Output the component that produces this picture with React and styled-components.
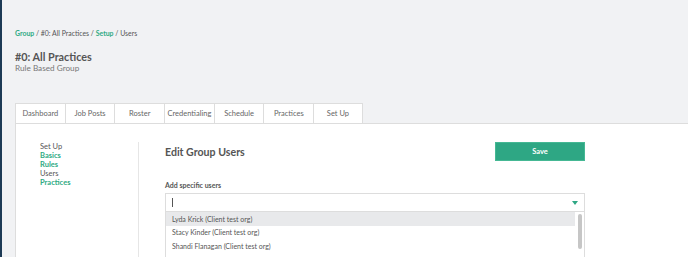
import React from "react";
import styled, { createGlobalStyle } from "styled-components";

const Global = createGlobalStyle`
  html, body { margin: 0; padding: 0; }
  body {
    background: #f1f2f4;
    font-family: "Lato", "Open Sans", sans-serif;
    color: #555;
    overflow: hidden;
  }
`;

const Page = styled.div`
  height: 257px;
  overflow: hidden;
  border-left: 2px solid #1d3a55;
  padding: 28px 0 0 13px;
  box-sizing: border-box;
`;

const Crumbs = styled.div`
  font-size: 6.9px;
  color: #555;
  line-height: 10px;
`;

const CrumbLink = styled.span`
  color: #2eaa83;
  font-weight: 700;
`;

const Title = styled.h1`
  margin: 12px 0 0;
  font-size: 10.8px;
  line-height: 13px;
  font-weight: 700;
  color: #555;
`;

const Subtitle = styled.div`
  font-size: 8.2px;
  line-height: 10px;
  color: #777;
`;

const Tabs = styled.div`
  display: flex;
  margin-top: 30px;
`;

const Tab = styled.div`
  width: 49.7px;
  height: 20px;
  box-sizing: border-box;
  border: 1px solid #ddd;
  border-right: none;
  border-bottom: none;
  background: #fff;
  font-size: 7.5px;
  color: #666;
  display: flex;
  align-items: center;
  justify-content: center;
  &:last-child { border-right: 1px solid #ddd; }
`;

const Panel = styled.div`
  background: #fff;
  border-top: 1px solid #ddd;
  border-left: 1px solid #ddd;
  display: flex;
  padding: 18px 0 0 24px;
  height: 200px;
`;

const Nav = styled.div`
  width: 98px;
  border-right: 1px solid #e6e6e6;
  font-size: 7.5px;
  line-height: 9px;
  display: flex;
  flex-direction: column;
`;

const NavItem = styled.div`
  color: ${(p) => (p.$link ? "#2eaa83" : "#555")};
  font-weight: ${(p) => (p.$link ? 700 : 400)};
`;

const Main = styled.div`
  width: 420px;
  margin-left: 26px;
`;

const Header = styled.div`
  display: flex;
  justify-content: space-between;
  align-items: center;
`;

const H2 = styled.h2`
  margin: 0;
  font-size: 10.6px;
  font-weight: 700;
  color: #555;
`;

const SaveButton = styled.button`
  width: 90px;
  height: 19px;
  background: #2ea784;
  border: 1px solid #45b894;
  color: #fff;
  font-family: inherit;
  font-size: 7.5px;
  font-weight: 700;
  padding: 0;
`;

const Label = styled.div`
  margin-top: 20px;
  font-size: 7px;
  line-height: 9px;
  font-weight: 700;
  color: #555;
`;

const Select = styled.div`
  margin-top: 3px;
  border: 1px solid #ddd;
  height: 17px;
  display: flex;
  align-items: center;
  justify-content: space-between;
  padding: 0 6px;
`;

const Caret = styled.div`
  width: 1px;
  height: 9px;
  background: #555;
`;

const Arrow = styled.div`
  width: 0;
  height: 0;
  border-left: 3.5px solid transparent;
  border-right: 3.5px solid transparent;
  border-top: 4px solid #2ea784;
`;

const List = styled.div`
  position: relative;
  border-left: 1px solid #ddd;
  border-right: 1px solid #ddd;
  height: 60px;
`;

const Option = styled.div`
  height: 13.5px;
  display: flex;
  align-items: center;
  padding-left: 6px;
  margin-right: 9px;
  font-size: 7px;
  color: #555;
  background: ${(p) => (p.$active ? "#e8e9eb" : "transparent")};
`;

const Scrollbar = styled.div`
  position: absolute;
  right: 2px;
  top: 2px;
  width: 4px;
  height: 35px;
  border-radius: 2px;
  background: #c6c6c6;
`;

export default function App() {
  return (
    <>
      <Global />
      <Page>
        <Crumbs>
          <CrumbLink>Group</CrumbLink> / #0: All Practices / <CrumbLink>Setup</CrumbLink> / Users
        </Crumbs>
        <Title>#0: All Practices</Title>
        <Subtitle>Rule Based Group</Subtitle>
        <Tabs>
          {["Dashboard", "Job Posts", "Roster", "Credentialing", "Schedule", "Practices", "Set Up"].map((t) => (
            <Tab key={t}>{t}</Tab>
          ))}
        </Tabs>
        <Panel>
          <Nav>
            <NavItem>Set Up</NavItem>
            <NavItem $link>Basics</NavItem>
            <NavItem $link>Rules</NavItem>
            <NavItem>Users</NavItem>
            <NavItem $link>Practices</NavItem>
          </Nav>
          <Main>
            <Header>
              <H2>Edit Group Users</H2>
              <SaveButton>Save</SaveButton>
            </Header>
            <Label>Add specific users</Label>
            <Select>
              <Caret />
              <Arrow />
            </Select>
            <List>
              <Option $active>Lyda Krick (Client test org)</Option>
              <Option>Stacy Kinder (Client test org)</Option>
              <Option>Shandi Flanagan (Client test org)</Option>
              <Scrollbar />
            </List>
          </Main>
        </Panel>
      </Page>
    </>
  );
}
